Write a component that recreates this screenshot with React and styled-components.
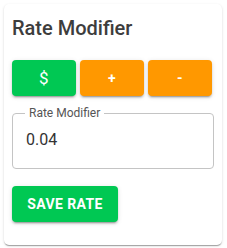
import styled, { createGlobalStyle } from "styled-components";

const GlobalStyle = createGlobalStyle`
  body {
    margin: 0;
    background: #fff;
    font-family: Roboto, "Liberation Sans", sans-serif;
  }
`;

const Page = styled.div`
  padding: 4px;
`;

const Card = styled.div`
  width: 218px;
  box-sizing: border-box;
  padding: 8px 8px 23px;
  background: #fff;
  border-radius: 5px;
  box-shadow: 0px 2px 1px -1px rgba(0, 0, 0, 0.2),
    0px 1px 1px 0px rgba(0, 0, 0, 0.14), 0px 1px 3px 0px rgba(0, 0, 0, 0.12);
  display: flex;
  flex-direction: column;
  align-items: flex-start;
`;

const Title = styled.h2`
  margin: 0 0 16px;
  font-size: 20px;
  line-height: 32px;
  font-weight: 500;
  color: #3d3d3d;
`;

const ButtonRow = styled.div`
  display: flex;
  gap: 4px;
`;

const Button = styled.button`
  border: none;
  border-radius: 4px;
  height: 36px;
  width: ${({ $wide }) => ($wide ? "106px" : "64px")};
  padding: 0;
  color: #fff;
  background: ${({ $tone }) => ($tone === "orange" ? "#ff9800" : "#00c853")};
  font-family: Roboto, "Liberation Sans", sans-serif;
  font-size: ${({ $size }) => $size || "14px"};
  font-weight: ${({ $weight }) => $weight || 700};
  letter-spacing: 0.4px;
  text-transform: uppercase;
  box-shadow: 0px 3px 1px -2px rgba(0, 0, 0, 0.2),
    0px 2px 2px 0px rgba(0, 0, 0, 0.14), 0px 1px 5px 0px rgba(0, 0, 0, 0.12);
  cursor: pointer;
`;

const Field = styled.fieldset`
  margin: 10px 0 17px;
  width: 202px;
  box-sizing: border-box;
  border: 1px solid #c4c4c4;
  border-radius: 4px;
  padding: 0 13px 16px;
  min-width: 0;
`;

const Legend = styled.legend`
  margin-left: -1px;
  padding: 0 4px;
  font-size: 12px;
  line-height: 14px;
  color: #555;
`;

const Value = styled.div`
  margin-top: 8px;
  font-size: 16px;
  line-height: 24px;
  color: #333;
`;

export default function App() {
  return (
    <Page>
      <GlobalStyle />
      <Card>
        <Title>Rate Modifier</Title>
        <ButtonRow>
          <Button $size="17px" $weight={400}>$</Button>
          <Button $tone="orange">+</Button>
          <Button $tone="orange">-</Button>
        </ButtonRow>
        <Field>
          <Legend>Rate Modifier</Legend>
          <Value>0.04</Value>
        </Field>
        <Button $wide>Save Rate</Button>
      </Card>
    </Page>
  );
}
